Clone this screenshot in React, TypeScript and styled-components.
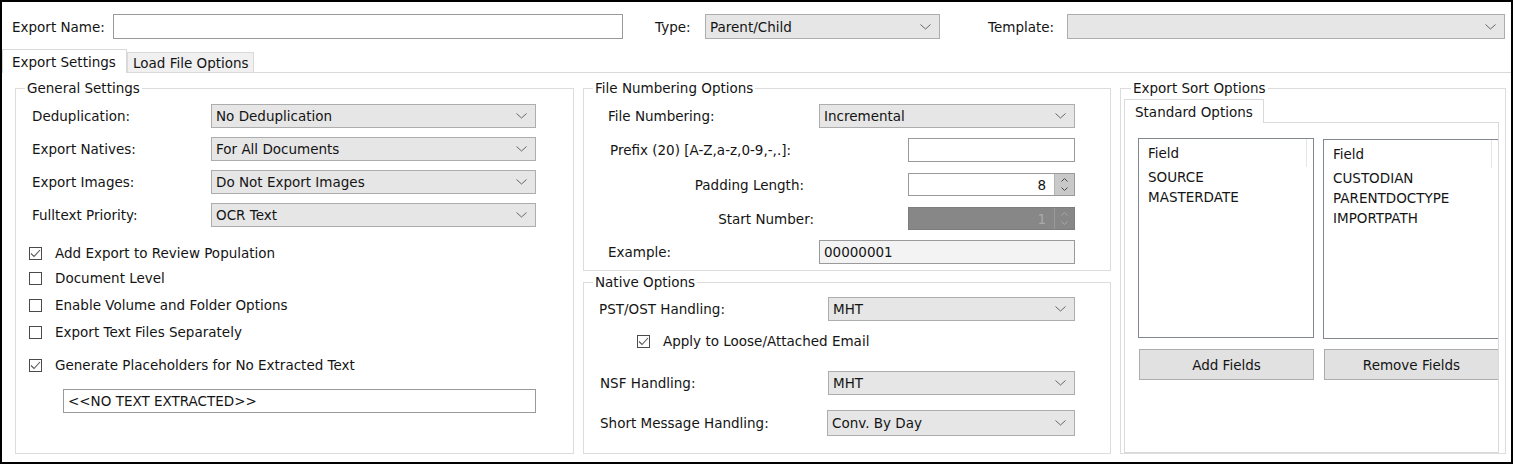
import React from 'react';
import styled, { createGlobalStyle } from 'styled-components';

const GlobalStyle = createGlobalStyle`
  html, body { margin: 0; padding: 0; background: #fff; }
  body {
    font-family: "DejaVu Sans", Verdana, sans-serif;
    font-size: 13.5px;
    color: #141414;
  }
  * { box-sizing: border-box; }
`;

const Frame = styled.div`
  position: relative;
  width: 1513px;
  height: 464px;
  border: 2px solid #000;
  background: #fff;
  overflow: hidden;
`;

const EdgeMark = styled.div`
  position: absolute;
  top: -2px;
  right: -2px;
  width: 2px;
  height: 42px;
  background: #23235e;
`;

/* ---------- top bar ---------- */
const TopBar = styled.div`
  display: flex;
  align-items: center;
  padding: 12px 0 0 10px;
`;

const BarLabel = styled.div<{ $w: number; $ml?: number }>`
  width: ${(p) => p.$w}px;
  margin-left: ${(p) => p.$ml ?? 0}px;
  white-space: nowrap;
`;

const TextBox = styled.div<{ $w: number; $h?: number; $bg?: string; $ml?: number }>`
  width: ${(p) => p.$w}px;
  height: ${(p) => p.$h ?? 24}px;
  margin-left: ${(p) => p.$ml ?? 0}px;
  flex: none;
  border: 1px solid #9a9a9a;
  background: ${(p) => p.$bg ?? '#fff'};
  display: flex;
  align-items: center;
  padding-left: 4px;
  white-space: nowrap;
`;

const SelectBox = styled.div<{ $w: number; $h: number }>`
  width: ${(p) => p.$w}px;
  height: ${(p) => p.$h}px;
  flex: none;
  border: 1px solid #adadad;
  background: #e6e6e6;
  display: flex;
  align-items: center;
  justify-content: space-between;
  padding: 0 8px 0 4px;
  white-space: nowrap;
`;

const Chevron = () => (
  <svg width="11" height="6" viewBox="0 0 11 6" style={{ flex: 'none' }}>
    <polyline points="0.5,0.5 5.5,5 10.5,0.5" fill="none" stroke="#666" strokeWidth="1" />
  </svg>
);

const Select = ({ value, w, h = 24 }: { value?: string; w: number; h?: number }) => (
  <SelectBox $w={w} $h={h}>
    <span>{value ?? ''}</span>
    <Chevron />
  </SelectBox>
);

/* ---------- numeric up/down ---------- */
const NumBox = styled.div<{ $w: number; $disabled?: boolean }>`
  width: ${(p) => p.$w}px;
  height: 23px;
  flex: none;
  display: flex;
  border: 1px solid ${(p) => (p.$disabled ? '#7d7d7d' : '#9a9a9a')};
  background: ${(p) => (p.$disabled ? '#878787' : '#fff')};
`;

const NumValue = styled.div<{ $disabled?: boolean }>`
  flex: 1;
  display: flex;
  align-items: center;
  justify-content: flex-end;
  padding-right: 8px;
  color: ${(p) => (p.$disabled ? '#a9a9a9' : '#141414')};
`;

const Spinner = styled.div<{ $disabled?: boolean }>`
  width: 20px;
  display: flex;
  flex-direction: column;
  align-items: center;
  justify-content: center;
  gap: 5px;
  background: ${(p) => (p.$disabled ? '#878787' : '#c9c9c9')};
  border-left: 1px solid ${(p) => (p.$disabled ? '#9a9a9a' : '#b5b5b5')};
`;

const SpinArrow = ({ up, color }: { up?: boolean; color: string }) => (
  <svg width="7" height="4" viewBox="0 0 7 4">
    <polyline
      points={up ? '0.5,3.5 3.5,0.5 6.5,3.5' : '0.5,0.5 3.5,3.5 6.5,0.5'}
      fill="none"
      stroke={color}
      strokeWidth="1"
    />
  </svg>
);

const Numeric = ({ value, w, disabled }: { value: string; w: number; disabled?: boolean }) => (
  <NumBox $w={w} $disabled={disabled}>
    <NumValue $disabled={disabled}>{value}</NumValue>
    <Spinner $disabled={disabled}>
      <SpinArrow up color={disabled ? '#a6a6a6' : '#4a4a4a'} />
      <SpinArrow color={disabled ? '#a6a6a6' : '#4a4a4a'} />
    </Spinner>
  </NumBox>
);

/* ---------- tabs ---------- */
const TabStrip = styled.div`
  display: flex;
  align-items: flex-end;
  margin-top: 10px;
  height: 24px;
  border-bottom: 1px solid #d9d9d9;
`;

const Tab = styled.div<{ $active?: boolean; $w: number; $pl: number }>`
  width: ${(p) => p.$w}px;
  height: ${(p) => (p.$active ? 24 : 20)}px;
  margin-bottom: ${(p) => (p.$active ? -1 : 0)}px;
  padding-left: ${(p) => p.$pl}px;
  display: flex;
  align-items: center;
  border: 1px solid #d9d9d9;
  border-bottom: ${(p) => (p.$active ? 'none' : '0')};
  background: ${(p) => (p.$active ? '#fff' : '#f0f0f0')};
  white-space: nowrap;
`;

/* ---------- panels ---------- */
const Panels = styled.div`
  display: flex;
  align-items: flex-start;
  gap: 9px;
  padding-left: 13px;
  margin-top: 8px;
`;

const Column = styled.div`
  display: flex;
  flex-direction: column;
`;

const Group = styled.fieldset<{ $w: number; $h: number; $mt?: number }>`
  width: ${(p) => p.$w}px;
  height: ${(p) => p.$h}px;
  margin: ${(p) => p.$mt ?? 0}px 0 0 0;
  padding: 0;
  min-width: 0;
  border: 1px solid #dcdcdc;
`;

const Legend = styled.legend<{ $ml?: number }>`
  margin-left: ${(p) => p.$ml ?? 9}px;
  padding: 0 2px;
  line-height: 14px;
  white-space: nowrap;
`;

const GroupBody = styled.div<{ $pt?: number; $pl?: number; $pr?: number }>`
  padding: ${(p) => p.$pt ?? 0}px ${(p) => p.$pr ?? 0}px 0 ${(p) => p.$pl ?? 0}px;
`;

const FieldGrid = styled.div`
  display: grid;
  grid-template-columns: 179px 325px;
  grid-auto-rows: 24px;
  row-gap: 9px;
  align-items: center;
`;

const Row = styled.div<{ $h: number; $mt: number; $pl?: number }>`
  display: flex;
  align-items: center;
  height: ${(p) => p.$h}px;
  margin-top: ${(p) => p.$mt}px;
  padding-left: ${(p) => p.$pl ?? 0}px;
`;

const RowLabel = styled.div<{ $right?: boolean; $pr?: number }>`
  flex: 1;
  white-space: nowrap;
  text-align: ${(p) => (p.$right ? 'right' : 'left')};
  padding-right: ${(p) => p.$pr ?? 0}px;
`;

const CheckRow = styled.div<{ $mt: number; $pl?: number }>`
  display: flex;
  align-items: center;
  height: 20px;
  margin-top: ${(p) => p.$mt}px;
  padding-left: ${(p) => p.$pl ?? 0}px;
  gap: 13px;
  white-space: nowrap;
`;

const Box = styled.div`
  width: 13px;
  height: 13px;
  flex: none;
  border: 1px solid #4a4a4a;
  background: #fff;
  display: flex;
  align-items: center;
  justify-content: center;
`;

const Check = ({ checked }: { checked?: boolean }) => (
  <Box>
    {checked && (
      <svg width="11" height="9" viewBox="0 0 11 9">
        <polyline points="1,4.5 4,7.5 10,1" fill="none" stroke="#555" strokeWidth="1.1" />
      </svg>
    )}
  </Box>
);

/* ---------- sort options ---------- */
const InnerTab = styled.div`
  position: relative;
  z-index: 1;
  width: 140px;
  height: 24px;
  margin-top: 4px;
  margin-bottom: -1px;
  padding-left: 10px;
  display: flex;
  align-items: center;
  border: 1px solid #d9d9d9;
  border-bottom: none;
  background: #fff;
  white-space: nowrap;
`;

const TabPage = styled.div`
  height: 331px;
  border: 1px solid #d9d9d9;
  padding: 15px 0 0 13px;
  overflow: hidden;
`;

const ListPair = styled.div`
  display: flex;
  gap: 9px;
  width: 400px;
`;

const ListBox = styled.div<{ $mt?: number }>`
  width: 176px;
  height: 200px;
  margin-top: ${(p) => p.$mt ?? 0}px;
  flex: none;
  border: 1px solid #828790;
  background: #fff;
`;

const ListHeader = styled.div`
  width: 168px;
  height: 28px;
  padding-left: 9px;
  display: flex;
  align-items: center;
  border-right: 1px solid #e5e5e5;
`;

const ListItem = styled.div`
  padding-left: 9px;
  line-height: 20px;
  white-space: nowrap;
`;

const ButtonRow = styled.div`
  display: flex;
  gap: 10px;
  margin: 10px 0 0 1px;
  width: 400px;
`;

const Button = styled.div`
  width: 175px;
  height: 31px;
  flex: none;
  border: 1px solid #adadad;
  background: #e1e1e1;
  display: flex;
  align-items: center;
  justify-content: center;
  white-space: nowrap;
`;

const ListView = ({ items, mt }: { items: string[]; mt?: number }) => (
  <ListBox $mt={mt}>
    <ListHeader>Field</ListHeader>
    {items.map((it) => (
      <ListItem key={it}>{it}</ListItem>
    ))}
  </ListBox>
);

export default function App() {
  return (
    <>
      <GlobalStyle />
      <Frame>
        <EdgeMark />
        <TopBar>
          <BarLabel $w={101}>Export Name:</BarLabel>
          <TextBox $w={510} $h={25} />
          <BarLabel $w={50} $ml={32}>Type:</BarLabel>
          <Select value="Parent/Child" w={235} h={25} />
          <BarLabel $w={79} $ml={48}>Template:</BarLabel>
          <Select w={438} h={25} />
        </TopBar>

        <TabStrip>
          <Tab $active $w={125} $pl={9}>Export Settings</Tab>
          <Tab $w={127} $pl={5}>Load File Options</Tab>
        </TabStrip>

        <Panels>
          {/* General Settings */}
          <Group $w={559} $h={373}>
            <Legend>General Settings</Legend>
            <GroupBody $pt={9} $pl={16}>
              <FieldGrid>
                <span>Deduplication:</span>
                <Select value="No Deduplication" w={325} />
                <span>Export Natives:</span>
                <Select value="For All Documents" w={325} />
                <span>Export Images:</span>
                <Select value="Do Not Export Images" w={325} />
                <span>Fulltext Priority:</span>
                <Select value="OCR Text" w={325} />
              </FieldGrid>
            </GroupBody>
            <GroupBody $pl={13}>
              <CheckRow $mt={16}>
                <Check checked />
                Add Export to Review Population
              </CheckRow>
              <CheckRow $mt={5}>
                <Check />
                Document Level
              </CheckRow>
              <CheckRow $mt={7}>
                <Check />
                Enable Volume and Folder Options
              </CheckRow>
              <CheckRow $mt={7}>
                <Check />
                Export Text Files Separately
              </CheckRow>
              <CheckRow $mt={13}>
                <Check checked />
                Generate Placeholders for No Extracted Text
              </CheckRow>
            </GroupBody>
            <GroupBody $pl={47}>
              <Row $h={24} $mt={14}>
                <TextBox $w={473}>&lt;&lt;NO TEXT EXTRACTED&gt;&gt;</TextBox>
              </Row>
            </GroupBody>
          </Group>

          {/* Middle column */}
          <Column>
            <Group $w={528} $h={190}>
              <Legend>File Numbering Options</Legend>
              <GroupBody $pr={35}>
                <Row $h={24} $mt={9} $pl={24}>
                  <RowLabel>File Numbering:</RowLabel>
                  <Select value="Incremental" w={256} />
                </Row>
                <Row $h={24} $mt={10} $pl={26}>
                  <RowLabel>Prefix (20) [A-Z,a-z,0-9,-,.]:</RowLabel>
                  <TextBox $w={167} />
                </Row>
                <Row $h={23} $mt={11}>
                  <RowLabel $right $pr={104}>Padding Length:</RowLabel>
                  <Numeric value="8" w={167} />
                </Row>
                <Row $h={23} $mt={11}>
                  <RowLabel $right $pr={94}>Start Number:</RowLabel>
                  <Numeric value="1" w={167} disabled />
                </Row>
                <Row $h={24} $mt={10} $pl={24}>
                  <RowLabel>Example:</RowLabel>
                  <TextBox $w={256} $bg="#f3f3f3">00000001</TextBox>
                </Row>
              </GroupBody>
            </Group>

            <Group $w={528} $h={179} $mt={4}>
              <Legend>Native Options</Legend>
              <GroupBody $pr={35}>
                <Row $h={24} $mt={8} $pl={15}>
                  <RowLabel>PST/OST Handling:</RowLabel>
                  <Select value="MHT" w={247} />
                </Row>
                <CheckRow $mt={10} $pl={53}>
                  <Check checked />
                  Apply to Loose/Attached Email
                </CheckRow>
                <Row $h={24} $mt={20} $pl={16}>
                  <RowLabel>NSF Handling:</RowLabel>
                  <Select value="MHT" w={247} />
                </Row>
                <Row $h={26} $mt={15} $pl={16}>
                  <RowLabel>Short Message Handling:</RowLabel>
                  <Select value="Conv. By Day" w={248} h={26} />
                </Row>
              </GroupBody>
            </Group>
          </Column>

          {/* Export Sort Options */}
          <Group $w={386} $h={373}>
            <Legend $ml={10}>Export Sort Options</Legend>
            <GroupBody $pl={3} $pr={6}>
              <InnerTab>Standard Options</InnerTab>
              <TabPage>
                <ListPair>
                  <ListView items={['SOURCE', 'MASTERDATE']} />
                  <ListView items={['CUSTODIAN', 'PARENTDOCTYPE', 'IMPORTPATH']} mt={1} />
                </ListPair>
                <ButtonRow>
                  <Button>Add Fields</Button>
                  <Button>Remove Fields</Button>
                </ButtonRow>
              </TabPage>
            </GroupBody>
          </Group>
        </Panels>
      </Frame>
    </>
  );
}
